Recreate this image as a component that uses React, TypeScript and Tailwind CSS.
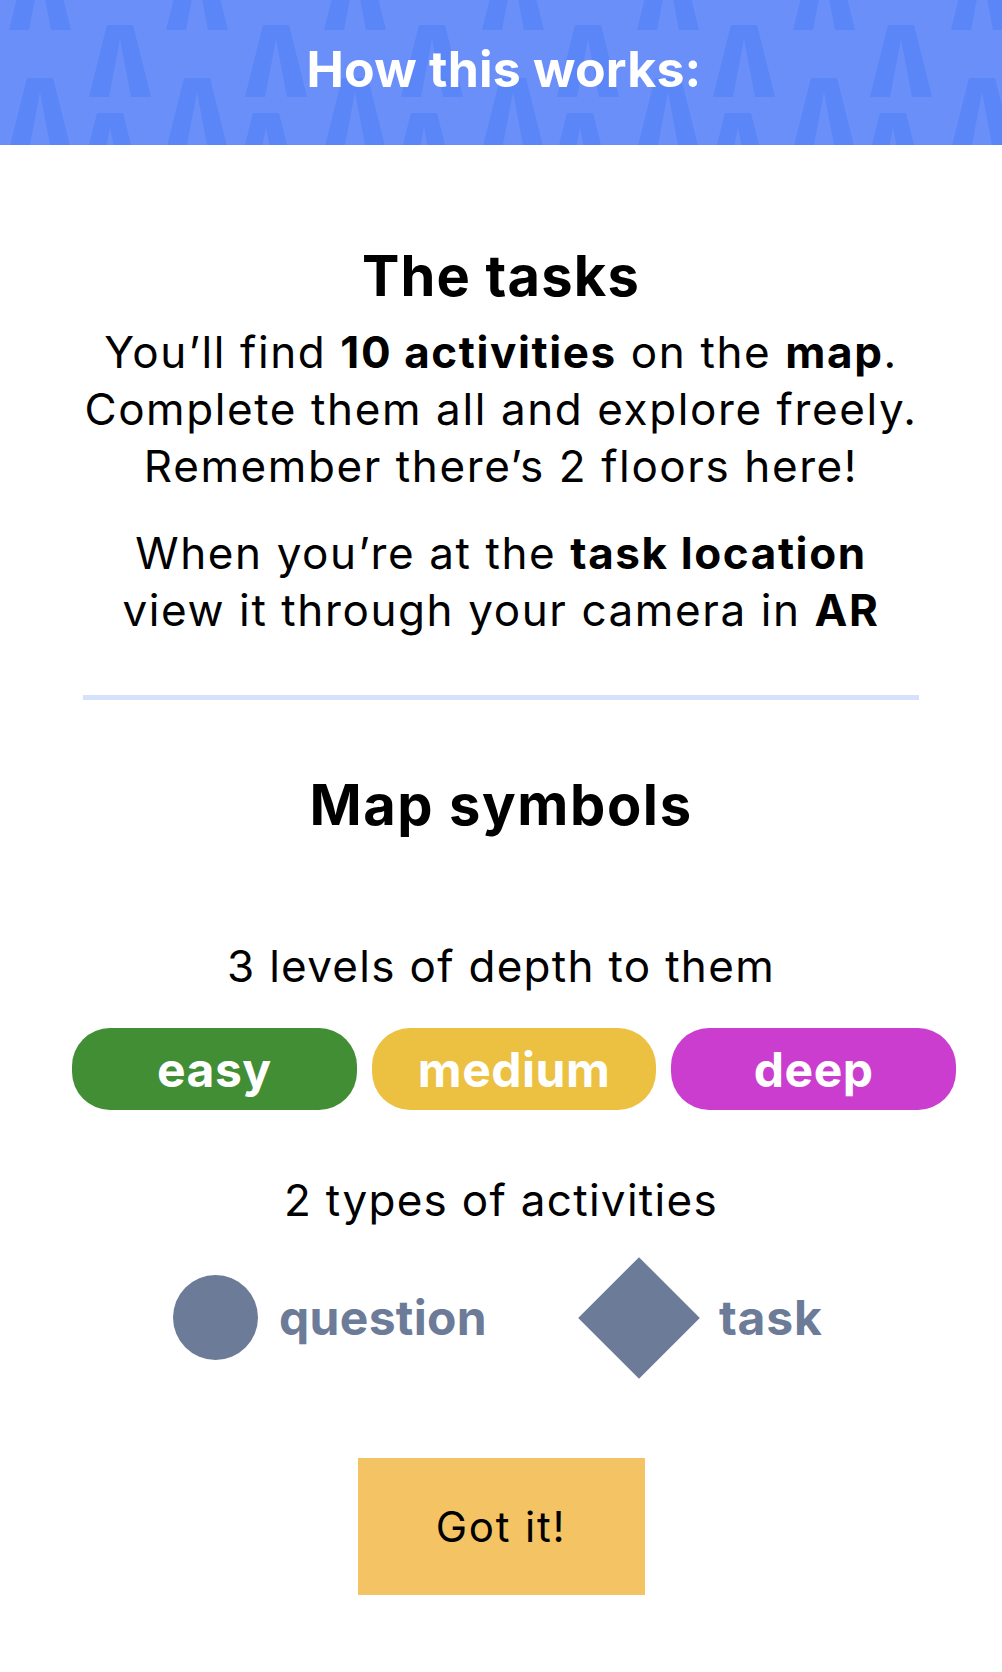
import React from "react";

const CENTERS_AC = [40, 197, 355, 513, 668, 824, 982];
const CENTERS_B = [-36, 120, 276, 432, 588, 744, 901, 1057];
const CENTERS_D = [-46, 110, 266, 424, 580, 738, 893, 1049];

function lambda(cx: number, t: number) {
  return `${cx - 13},${t} ${cx + 13},${t} ${cx + 31},${t + 72} ${cx + 11},${t + 72} ${cx},${t + 14} ${cx - 11},${t + 72} ${cx - 31},${t + 72}`;
}

function HeaderPattern() {
  const shapes: string[] = [];
  CENTERS_AC.forEach((c) => {
    shapes.push(lambda(c, -42));
    shapes.push(lambda(c, 78));
  });
  CENTERS_B.forEach((c) => shapes.push(lambda(c, 25)));
  CENTERS_D.forEach((c) => shapes.push(lambda(c, 113)));
  return (
    <svg
      className="absolute inset-0 w-full h-full"
      viewBox="0 0 1002 145"
      preserveAspectRatio="none"
      aria-hidden="true"
    >
      {shapes.map((p, i) => (
        <polygon key={i} points={p} fill="#5b86f8" />
      ))}
    </svg>
  );
}

export default function App() {
  const font = { fontFamily: "Inter, 'Noto Sans', sans-serif" };
  return (
    <div className="w-[1002px] min-h-[1672px] bg-white text-black flex flex-col" style={font}>
      <header className="relative h-[145px] bg-[#6b8ff8] overflow-hidden flex justify-center pt-[39px]">
        <HeaderPattern />
        <h1 className="relative text-white font-bold text-[50px] leading-[60px] tracking-[0.2px] pl-[6px]">
          How this works:
        </h1>
      </header>

      <section className="flex flex-col items-center text-center">
        <h2 className="mt-[99px] font-bold text-[56px] leading-[64px] tracking-[1.2px]">
          The tasks
        </h2>
        <p className="mt-4 text-[44px] leading-[57px] tracking-[1.6px] whitespace-nowrap">
          You’ll find <b className="font-bold">10 activities</b> on the{" "}
          <b className="font-bold">map</b>.<br />
          Complete them all and explore freely.
          <br />
          Remember there’s 2 floors here!
        </p>
        <p className="mt-[30px] text-[44px] leading-[57px] tracking-[1.6px] whitespace-nowrap">
          When you’re at the <b className="font-bold">task location</b>
          <br />
          view it through your camera in <b className="font-bold">AR</b>
        </p>
      </section>

      <div className="mt-[56px] mx-[83px] h-[5px] bg-[#d6e1fc]" />

      <section className="flex flex-col items-center text-center">
        <h2 className="mt-[73px] font-bold text-[56px] leading-[64px] tracking-[1.6px]">
          Map symbols
        </h2>
        <p className="mt-[101px] text-[44px] leading-[57px] tracking-[1.3px]">3 levels of depth to them</p>
      </section>

      <div className="mt-[33px] flex gap-[15px] pl-[72px] pr-[46px]">
        <div className="flex-1 h-[82px] rounded-[38px] bg-[#418e35] flex items-center justify-center text-white font-bold text-[48px] leading-none tracking-[0.5px] pt-[2px]">
          easy
        </div>
        <div className="flex-1 h-[82px] rounded-[38px] bg-[#ecc142] flex items-center justify-center text-white font-bold text-[48px] leading-none tracking-[0.5px] pt-[2px]">
          medium
        </div>
        <div className="flex-1 h-[82px] rounded-[38px] bg-[#cb3dcf] flex items-center justify-center text-white font-bold text-[48px] leading-none tracking-[0.5px] pt-[2px]">
          deep
        </div>
      </div>

      <p className="mt-[62px] text-center text-[44px] leading-[57px] tracking-[1.3px]">2 types of activities</p>

      <div className="mt-[28px] flex items-center pl-[173px] h-[121px] text-[#6c7b97]">
        <div className="w-[85px] h-[85px] rounded-full bg-[#6c7b97]" />
        <span className="ml-[21px] w-[205px] font-bold text-[48px] leading-none tracking-[0.3px] whitespace-nowrap">question</span>
        <div className="ml-[94px] w-[121px] h-[121px] flex items-center justify-center">
          <div className="w-[86px] h-[86px] bg-[#6c7b97] rotate-45" />
        </div>
        <span className="ml-[20px] w-[104px] font-bold text-[48px] leading-none tracking-[0.8px]">task</span>
      </div>

      <div className="mt-[80px] flex justify-center">
        <button className="w-[287px] h-[137px] bg-[#f4c464] flex items-center justify-center text-black text-[42px] leading-none tracking-[1.8px]">
          Got it!
        </button>
      </div>
    </div>
  );
}
